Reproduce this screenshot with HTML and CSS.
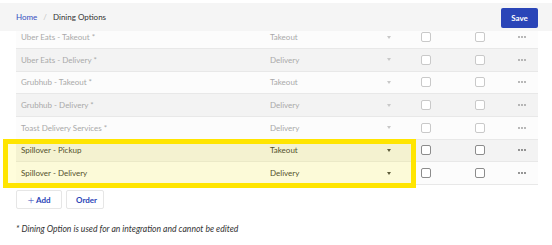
FILE: index.html
```html
<!DOCTYPE html>
<html lang="en">
<head>
  <meta charset="UTF-8" />
  <meta name="viewport" content="width=device-width, initial-scale=1.0"/>
  <title>Dining Options</title>
  <link rel="stylesheet" href="styles.css">
</head>
<body>
  <div class="topbar">
    <div class="crumbs">
      <a class="crumb-link" href="#">Home</a>
      <span class="crumb-sep">/</span>
      <span class="crumb-current">Dining Options</span>
    </div>
    <button class="btn-save">Save</button>
  </div>

  <div class="content">
    <div class="table-wrap">
      <div class="rows">
        <div class="row locked">
          <div class="cell name">Uber Eats - Takeout *</div>
          <div class="cell type"><span>Takeout</span><i class="caret"></i></div>
          <div class="cell check"><span class="box"></span></div>
          <div class="cell check"><span class="box"></span></div>
          <div class="cell more"><svg width="8" height="2" viewBox="0 0 8 2"><circle cx="1" cy="1" r="0.9"/><circle cx="4" cy="1" r="0.9"/><circle cx="7" cy="1" r="0.9"/></svg></div>
        </div>
        <div class="row locked">
          <div class="cell name">Uber Eats - Delivery *</div>
          <div class="cell type"><span>Delivery</span><i class="caret"></i></div>
          <div class="cell check"><span class="box"></span></div>
          <div class="cell check"><span class="box"></span></div>
          <div class="cell more"><svg width="8" height="2" viewBox="0 0 8 2"><circle cx="1" cy="1" r="0.9"/><circle cx="4" cy="1" r="0.9"/><circle cx="7" cy="1" r="0.9"/></svg></div>
        </div>
        <div class="row locked">
          <div class="cell name">Grubhub - Takeout *</div>
          <div class="cell type"><span>Takeout</span><i class="caret"></i></div>
          <div class="cell check"><span class="box"></span></div>
          <div class="cell check"><span class="box"></span></div>
          <div class="cell more"><svg width="8" height="2" viewBox="0 0 8 2"><circle cx="1" cy="1" r="0.9"/><circle cx="4" cy="1" r="0.9"/><circle cx="7" cy="1" r="0.9"/></svg></div>
        </div>
        <div class="row locked">
          <div class="cell name">Grubhub - Delivery *</div>
          <div class="cell type"><span>Delivery</span><i class="caret"></i></div>
          <div class="cell check"><span class="box"></span></div>
          <div class="cell check"><span class="box"></span></div>
          <div class="cell more"><svg width="8" height="2" viewBox="0 0 8 2"><circle cx="1" cy="1" r="0.9"/><circle cx="4" cy="1" r="0.9"/><circle cx="7" cy="1" r="0.9"/></svg></div>
        </div>
        <div class="row locked">
          <div class="cell name">Toast Delivery Services *</div>
          <div class="cell type"><span>Delivery</span><i class="caret"></i></div>
          <div class="cell check"><span class="box"></span></div>
          <div class="cell check"><span class="box"></span></div>
          <div class="cell more"><svg width="8" height="2" viewBox="0 0 8 2"><circle cx="1" cy="1" r="0.9"/><circle cx="4" cy="1" r="0.9"/><circle cx="7" cy="1" r="0.9"/></svg></div>
        </div>
        <div class="row">
          <div class="cell name">Spillover - Pickup</div>
          <div class="cell type"><span>Takeout</span><i class="caret"></i></div>
          <div class="cell check"><span class="box"></span></div>
          <div class="cell check"><span class="box"></span></div>
          <div class="cell more"><svg width="8" height="2" viewBox="0 0 8 2"><circle cx="1" cy="1" r="0.9"/><circle cx="4" cy="1" r="0.9"/><circle cx="7" cy="1" r="0.9"/></svg></div>
        </div>
        <div class="row">
          <div class="cell name">Spillover - Delivery</div>
          <div class="cell type"><span>Delivery</span><i class="caret"></i></div>
          <div class="cell check"><span class="box"></span></div>
          <div class="cell check"><span class="box"></span></div>
          <div class="cell more"><svg width="8" height="2" viewBox="0 0 8 2"><circle cx="1" cy="1" r="0.9"/><circle cx="4" cy="1" r="0.9"/><circle cx="7" cy="1" r="0.9"/></svg></div>
        </div>
      </div>
    </div>

    <div class="highlight"></div>

    <div class="actions">
      <button class="btn-ghost"><span class="plus">+</span> Add</button>
      <button class="btn-ghost">Order</button>
    </div>

    <p class="note">* Dining Option is used for an integration and cannot be edited</p>
  </div>
</body>
</html>
```

FILE: styles.css
```css
body {
  margin: 0;
  padding: 3px 0 0;
  background: #fff;
  font-family: 'Lato', 'Liberation Sans', sans-serif;
  font-size: 8px;
  color: #333;
  width: 552px;
  height: 245px;
  overflow: hidden;
}
.topbar {
  height: 28px;
  background-color: #f5f5f5;
  display: flex;
  align-items: center;
  justify-content: space-between;
  padding: 0 14px 0 16px;
}
.crumbs { display: flex; align-items: center; gap: 6px; }
.crumb-link { color: #3550c0; text-decoration: none; }
.crumb-sep { color: #c4c4c4; }
.crumb-current { color: #333; }
.btn-save {
  width: 37px;
  height: 20px;
  margin-top: 2px;
  border: none;
  border-radius: 2px;
  background-color: #2a45b8;
  color: #fff;
  font-family: inherit;
  font-size: 8px;
  font-weight: 700;
  padding: 0;
}

.content { position: relative; padding: 0 14px 0 16px; }
.table-wrap { overflow: hidden; height: 154px; }
.rows { margin-top: -4.67px; }
.row {
  display: grid;
  grid-template-columns: 249px 135px 55px 55px 1fr;
  height: 22.67px;
  box-sizing: border-box;
  border-bottom: 1px solid #e8e8e8;
  background-color: #fcfcfc;
}
.row:nth-child(even) { background-color: #f3f3f3; }
.cell { display: flex; align-items: center; }
.name { padding-left: 5px; }
.type { padding: 0 9px 0 5px; justify-content: space-between; }
.caret {
  width: 0; height: 0;
  border-left: 2px solid transparent;
  border-right: 2px solid transparent;
  border-top: 3px solid #444;
}
.check { padding-left: 21px; }
.check + .check { padding-left: 20px; }
.box {
  width: 10px; height: 10px;
  box-sizing: border-box;
  border: 1px solid #8c8c8c;
  border-radius: 2px;
  background: #fff;
}
.more { justify-content: center; padding-right: 4px; }
.more svg { fill: #666; }

.locked { color: #a9a9a9; }
.locked .caret { border-top-color: #c8c8c8; }
.locked .box { border-color: #c9c9c9; }
.locked .more svg { fill: #999; }

.highlight {
  position: absolute;
  left: 3px;
  top: 108px;
  width: 413px;
  height: 49px;
  box-sizing: border-box;
  border: 5px solid #ffe500;
  background: rgba(255, 238, 0, 0.14);
}

.actions { display: flex; gap: 4px; margin-top: 5px; }
.btn-ghost {
  height: 19px;
  padding: 0 9px;
  border: 1px solid #e6e6e6;
  border-radius: 2px;
  background: #fff;
  color: #2a45b8;
  font-family: inherit;
  font-size: 8px;
  font-weight: 700;
}
.btn-ghost:first-child { width: 46px; }
.btn-ghost:last-child { width: 38px; }
.plus { font-size: 12px; font-weight: 300; line-height: 1; vertical-align: -1px; }
.note {
  margin: 15px 0 0;
  font-style: italic;
  font-size: 8.6px;
  color: #333;
}
```
